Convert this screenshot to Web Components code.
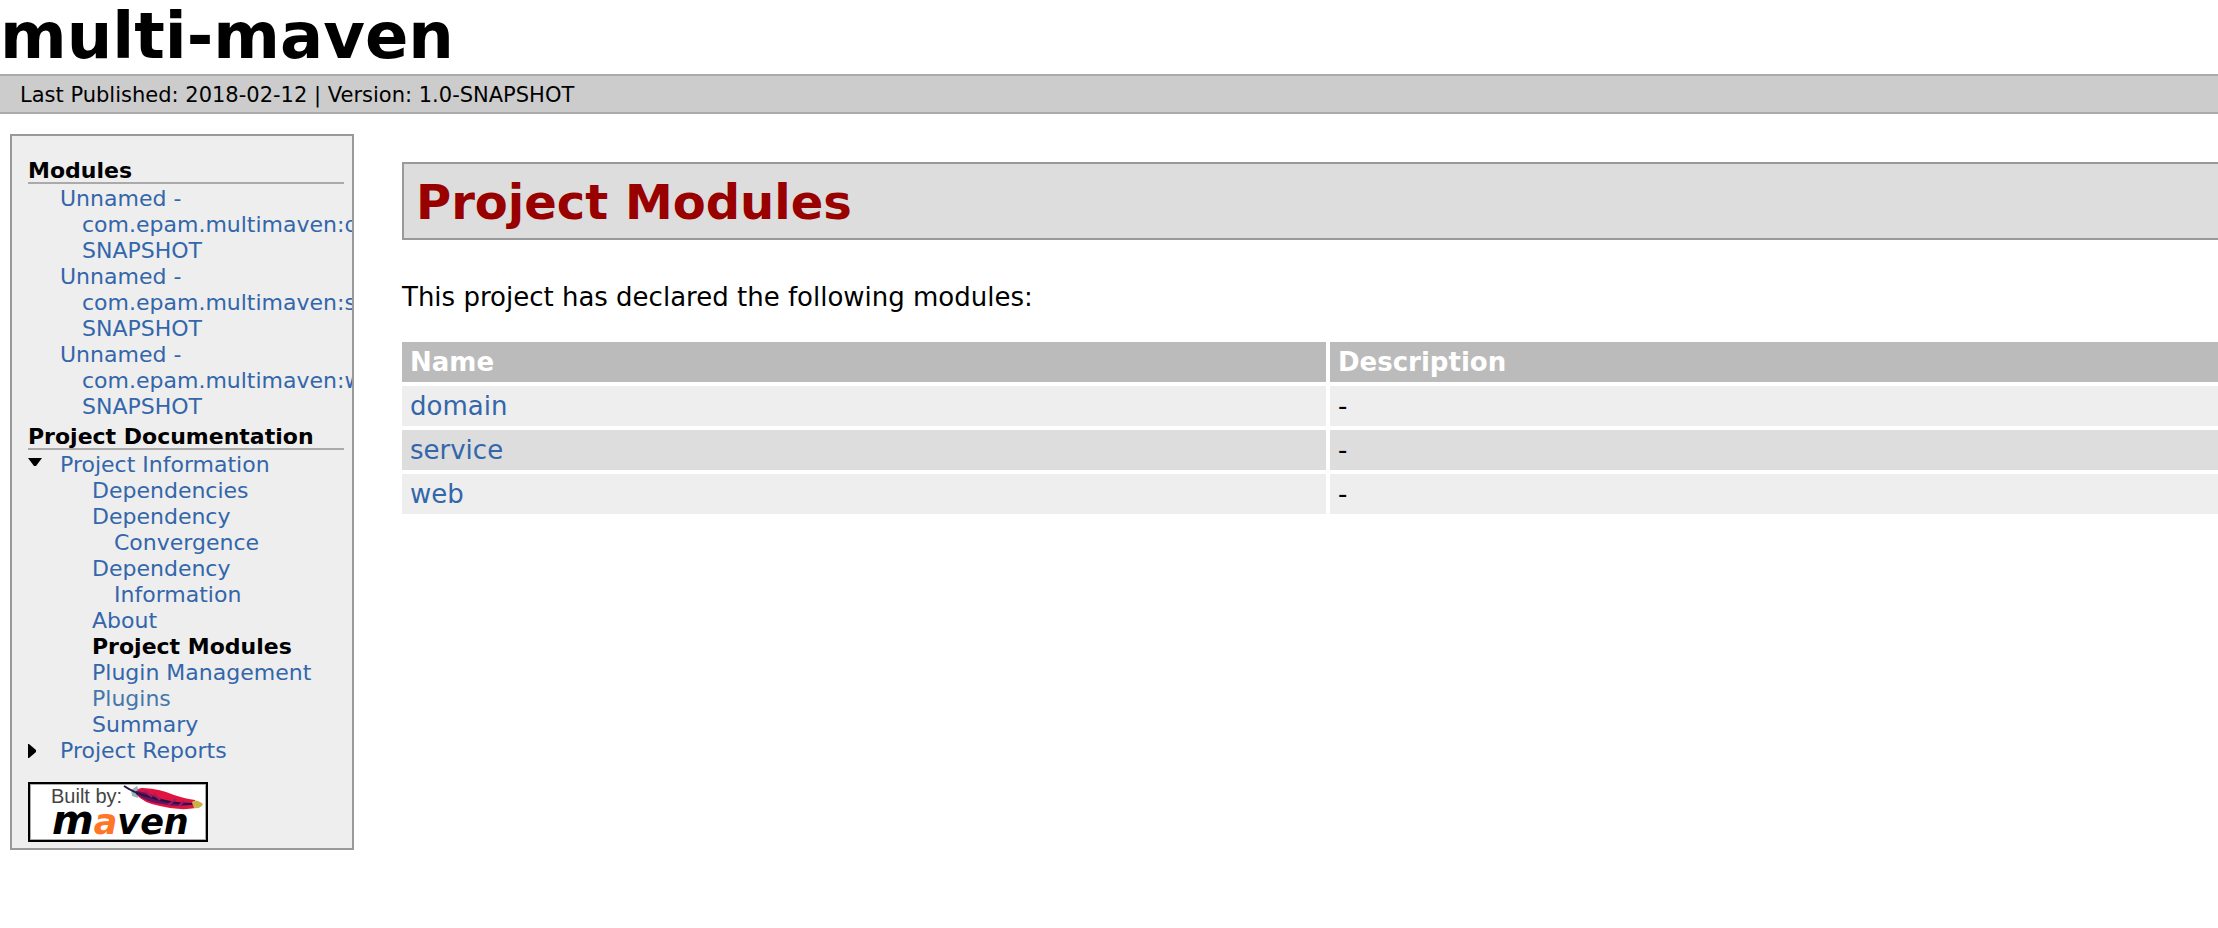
<!DOCTYPE html>
<html lang="en">
<head>
<meta charset="utf-8">
<title>multi-maven – Project Modules</title>
<style>
  body { margin: 0; background: #fff; color: #000; font-family: Verdana, "DejaVu Sans", sans-serif; }
</style>
</head>
<body>
<site-page>
  <site-banner slot="banner">multi-maven</site-banner>
  <site-status slot="status">
    <span slot="date">Last Published: 2018-02-12</span>
    <span slot="version">Version: 1.0-SNAPSHOT</span>
  </site-status>

  <site-nav slot="nav">
    <nav-section>
      <span slot="title">Modules</span>
      <nav-item href="#domain">Unnamed - com.epam.multimaven:domain:jar:1.0-SNAPSHOT</nav-item>
      <nav-item href="#service">Unnamed - com.epam.multimaven:service:jar:1.0-SNAPSHOT</nav-item>
      <nav-item href="#web">Unnamed - com.epam.multimaven:web:war:1.0-SNAPSHOT</nav-item>
    </nav-section>
    <nav-section>
      <span slot="title">Project Documentation</span>
      <nav-item href="#info" marker="open">Project Information
        <nav-item slot="children" href="#dependencies">Dependencies</nav-item>
        <nav-item slot="children" href="#convergence">Dependency Convergence</nav-item>
        <nav-item slot="children" href="#dependency-info">Dependency Information</nav-item>
        <nav-item slot="children" href="#about">About</nav-item>
        <nav-item slot="children" current>Project Modules</nav-item>
        <nav-item slot="children" href="#plugin-management">Plugin Management</nav-item>
        <nav-item slot="children" href="#plugins" class="active">Plugins</nav-item>
        <nav-item slot="children" href="#summary">Summary</nav-item>
      </nav-item>
      <nav-item href="#reports" marker="closed">Project Reports</nav-item>
    </nav-section>
    <maven-badge slot="badge"></maven-badge>
  </site-nav>

  <project-modules slot="main">
    <span slot="title">Project Modules</span>
    <span slot="intro">This project has declared the following modules:</span>
  </project-modules>
</site-page>

<script>
  const define = (name, html, setup) => customElements.define(name, class extends HTMLElement {
    constructor() {
      super();
      const template = document.createElement('template');
      template.innerHTML = html;
      this.attachShadow({ mode: 'open' }).append(template.content.cloneNode(true));
    }
    connectedCallback() { if (setup) setup(this, this.shadowRoot); }
  });

  define('site-page', `
    <style>
      :host { display: block; }
      .columns { display: flex; align-items: flex-start; gap: 48px; padding: 20px 0 20px 10px; }
    </style>
    <header><slot name="banner"></slot><slot name="status"></slot></header>
    <div class="columns"><slot name="nav"></slot><slot name="main"></slot></div>`);

  define('site-banner', `
    <style>
      :host { display: block; padding-bottom: 2px; }
      h1 { margin: 0; font-size: 64px; line-height: 72px; }
    </style>
    <h1><slot></slot></h1>`);

  define('site-status', `
    <style>
      :host { display: block; padding: 2px 20px 0; background: #ccc; border: solid #aaa; border-width: 2px 0;
              font-size: 21px; line-height: 34px; }
    </style>
    <slot name="date"></slot>&nbsp;| <slot name="version"></slot>`);

  define('site-nav', `
    <style>
      :host { display: block; box-sizing: border-box; flex: 0 0 344px; overflow: hidden;
              padding: 22px 8px 6px 16px; background: #eee; border: 2px solid #999;
              font-size: 22px; line-height: 26px; }
      .badge { margin-top: 14px; }
    </style>
    <nav><slot></slot></nav>
    <div class="badge"><slot name="badge"></slot></div>`);

  define('nav-section', `
    <style>
      :host { display: block; }
      h2 { margin: 0; padding-top: 2px; border-bottom: 2px solid #aaa; font-size: 22px; line-height: 22px; }
      .items { padding: 2px 0 4px; }
    </style>
    <h2><slot name="title"></slot></h2>
    <div class="items" role="list"><slot></slot></div>`);

  define('nav-item', `
    <style>
      :host { display: block; padding-left: 32px; }
      :host([marker]) { padding-left: 0; }
      .row { display: flex; }
      .marker { display: none; flex: 0 0 32px; }
      :host([marker]) .marker { display: block; }
      svg { display: block; width: 14px; height: 14px; margin-top: 6px; }
      .label { min-width: 0; padding-left: 22px; text-indent: -22px; color: #36a; text-decoration: none; }
      :host(.active) .label { color: #47a; }
      :host([current]) .label { color: #000; font-weight: bold; }
      .children { display: none; padding-left: 32px; }
      :host([marker="open"]) .children { display: block; }
    </style>
    <div class="row">
      <span class="marker"><svg viewBox="0 0 14 14" aria-hidden="true"><path/></svg></span>
      <a class="label"><slot></slot></a>
    </div>
    <div class="children" role="list"><slot name="children"></slot></div>`,
    (host, root) => {
      host.setAttribute('role', 'listitem');
      const link = root.querySelector('a');
      if (host.hasAttribute('href')) link.href = host.getAttribute('href');
      else link.setAttribute('aria-current', 'page');
      root.querySelector('path').setAttribute('d',
        host.getAttribute('marker') === 'open' ? 'M0 0H14L8 8H6Z' : 'M0 0H1L8 6V8L1 14H0Z');
    });

  define('maven-badge', `
    <style>
      :host { display: block; }
      a { display: block; width: 180px; }
      svg { display: block; width: 180px; height: 60px; }
    </style>
    <a href="#maven" aria-label="Built by Maven">
      <svg viewBox="0 0 180 60">
        <rect width="180" height="60" fill="#000"/>
        <rect x="2" y="2" width="176" height="56" fill="#aaa"/>
        <rect x="3" y="3" width="174" height="54" fill="#fff"/>
        <text x="23" y="21" font-family="Liberation Sans" font-size="20" fill="#444">Built by:</text>
        <text x="24" y="52" font-family="DejaVu Sans" font-weight="bold" font-style="oblique" font-size="35"><tspan font-size="40">m</tspan><tspan fill="#ff7626">a</tspan>ven</text>
        <path d="M103 8L109 4L111 9L110 16L104 14Z" fill="#9eb2bd"/>
        <path d="M108 12Q109 5 115 6Q133 7 146 13Q158 17 167 18L168 26Q151 29 132 24Q115 21 108 12Z" fill="#e01440"/>
        <path d="M108 9Q120 10 130 16Q148 21 167 22Q151 26 134 22Q118 20 108 12Z" fill="#6b125f"/>
        <path d="M96 4Q108 12 122 15Q142 22 164 22" fill="none" stroke="#251341" stroke-width="2"/>
        <path d="M117 9l7 6M126 12l6 6M140 23l8-6M151 24l5-5" stroke="#a31a68" stroke-width="2"/>
        <path d="M164 20Q168 16 175 22Q173 27 166 26Z" fill="#c9b24a"/>
      </svg>
    </a>`);

  define('project-modules', `
    <style>
      :host { display: block; flex: 1 1 0; min-width: 0; overflow: hidden; padding-top: 28px;
              margin-left: -4px; font-size: 26px; line-height: 30px; }
      .sheet { display: block; margin: 0 -36px 0 4px; }
      h2 { margin: 0 0 42px; padding: 10px 12px 8px; background: #ddd; border: 2px solid #999;
           color: #900; font-size: 48px; line-height: 56px; }
      p { margin: 0; }
      table { width: calc(100% + 8px); margin: 26px -4px 0; border-spacing: 4px; table-layout: fixed; }
      th, td { padding: 5px 8px; text-align: left; }
      th { background: #bbb; color: #fff; }
      td { background: #eee; }
      tr:nth-child(even) td { background: #ddd; }
      a { color: #36a; text-decoration: none; }
    </style>
    <main class="sheet">
      <h2><slot name="title"></slot></h2>
      <p><slot name="intro"></slot></p>
      <table>
        <thead><tr><th scope="col">Name</th><th scope="col">Description</th></tr></thead>
        <tbody>
          <tr><td><a href="#domain">domain</a></td><td>-</td></tr>
          <tr><td><a href="#service">service</a></td><td>-</td></tr>
          <tr><td><a href="#web">web</a></td><td>-</td></tr>
        </tbody>
      </table>
    </main>`);
</script>
</body>
</html>
